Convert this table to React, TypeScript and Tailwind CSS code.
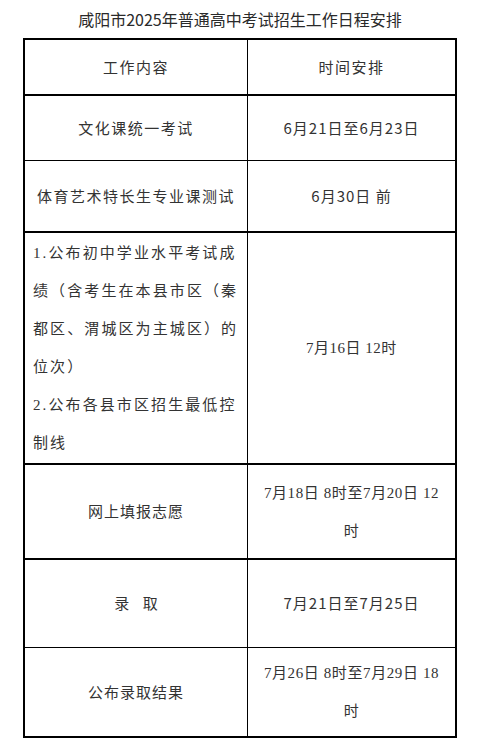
import React from 'react';

const sans = "font-['Noto_Sans_CJK_SC','Noto_Sans',sans-serif]";
const mixed = "font-['Liberation_Serif','Noto_Sans_CJK_SC',serif]";

type Row = {
  left: React.ReactNode;
  right: React.ReactNode;
  height: string;
  border: string;
};

const Cell: React.FC<{ children: React.ReactNode; className?: string }> = ({ children, className = '' }) => (
  <div className={`flex items-center justify-center text-center ${className}`}>{children}</div>
);

const Lines: React.FC<{ lines: string[]; className?: string }> = ({ lines, className = '' }) => (
  <div className={className}>
    {lines.map((l) => (
      <div key={l} className="whitespace-nowrap leading-[38px]">
        {l}
      </div>
    ))}
  </div>
);

// heights include the bottom border (border-box)
const rows: Row[] = [
  {
    left: <span className={`${sans} tracking-[1.5px]`}>工作内容</span>,
    right: <span className={`${sans} tracking-[1.5px]`}>时间安排</span>,
    height: 'h-[56px]',
    border: 'border-b-2',
  },
  {
    left: <span className={`${sans} tracking-[1.5px]`}>文化课统一考试</span>,
    right: <span className={`${sans} tracking-[1px]`}>6月21日至6月23日</span>,
    height: 'h-[65px]',
    border: 'border-b',
  },
  {
    left: <span className={`${sans} tracking-[1.5px]`}>体育艺术特长生专业课测试</span>,
    right: <span className={`${sans} tracking-[1px]`}>6月30日 前</span>,
    height: 'h-[72px]',
    border: 'border-b-2',
  },
  {
    left: (
      <Lines
        className={`${mixed} tracking-[2.1px] text-left w-full pl-[8px]`}
        lines={[
          '1.公布初中学业水平考试成',
          '绩（含考生在本县市区（秦',
          '都区、渭城区为主城区）的',
          '位次）',
          '2.公布各县市区招生最低控',
          '制线',
        ]}
      />
    ),
    right: <span className={`${mixed} tracking-[0.5px]`}>7月16日 12时</span>,
    height: 'h-[232px]',
    border: 'border-b-2',
  },
  {
    left: <span className={`${sans} tracking-[1px]`}>网上填报志愿</span>,
    right: <Lines className={`${mixed} tracking-[0.6px]`} lines={['7月18日 8时至7月20日 12', '时']} />,
    height: 'h-[95px]',
    border: 'border-b-2',
  },
  {
    left: <span className={`${sans} whitespace-pre`}>录    取</span>,
    right: <span className={`${sans} tracking-[1px]`}>7月21日至7月25日</span>,
    height: 'h-[88px]',
    border: 'border-b',
  },
  {
    left: <span className={`${sans} tracking-[1px]`}>公布录取结果</span>,
    right: <Lines className={`${mixed} tracking-[0.6px]`} lines={['7月26日 8时至7月29日 18', '时']} />,
    height: 'h-[90px]',
    border: 'border-b-2',
  },
];

export default function App() {
  return (
    <div className="w-[480px] h-[748px] bg-white text-[#333]">
      <h1 className={`${sans} h-[38px] flex items-center justify-center text-[16px] font-normal text-[#2a2a2a]`}>
        咸阳市2025年普通高中考试招生工作日程安排
      </h1>
      <div className="ml-[23px] w-[434px] border-x-2 border-t-2 border-black text-[15px]">
        {rows.map((r, i) => (
          <div key={i} className={`grid grid-cols-[223px_1fr] ${r.height} ${r.border} border-black`}>
            <Cell className="border-r border-black">{r.left}</Cell>
            <Cell>{r.right}</Cell>
          </div>
        ))}
      </div>
    </div>
  );
}
